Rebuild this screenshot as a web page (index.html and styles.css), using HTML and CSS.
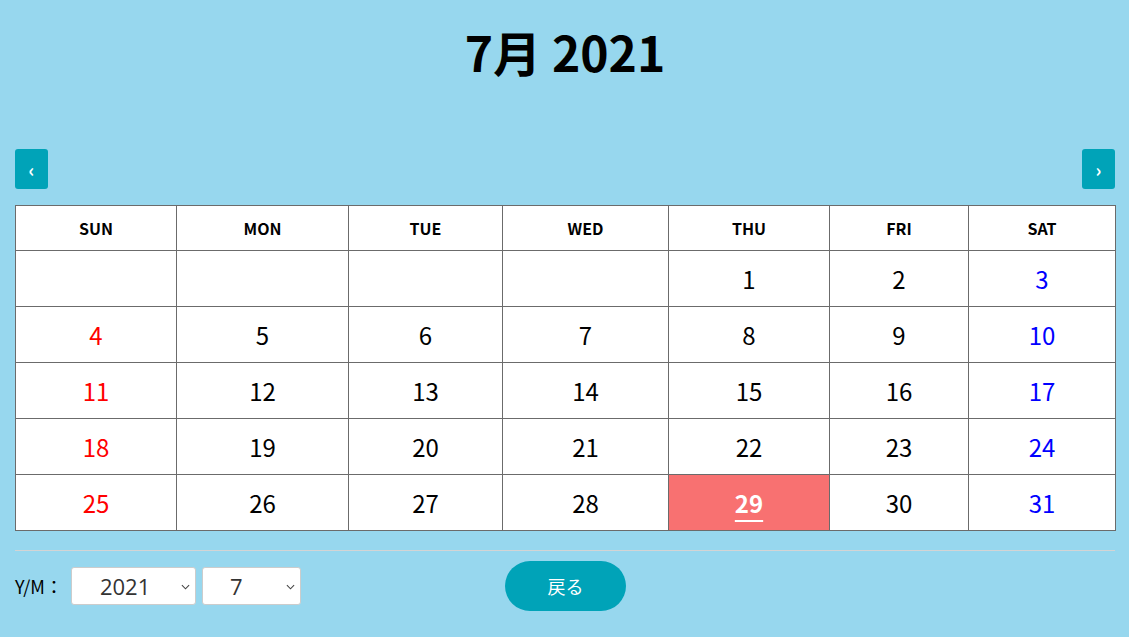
FILE: index.html
```html
<!DOCTYPE html>
<html lang="ja">
<head>
<meta charset="utf-8">
<title>7月 2021</title>
<link rel="stylesheet" href="styles.css">
</head>
<body>
<div class="page">
  <h1 class="title">7月 2021</h1>
  <div class="nav">
    <button class="nav-btn">‹</button>
    <button class="nav-btn">›</button>
  </div>
  <table class="cal">
    <colgroup>
      <col style="width:161px"><col style="width:172px"><col style="width:154px"><col style="width:166px"><col style="width:161px"><col style="width:139px"><col style="width:147px">
    </colgroup>
    <thead>
      <tr><th>SUN</th><th>MON</th><th>TUE</th><th>WED</th><th>THU</th><th>FRI</th><th>SAT</th></tr>
    </thead>
    <tbody>
      <tr><td></td><td></td><td></td><td></td><td>1</td><td>2</td><td class="sat">3</td></tr>
      <tr><td class="sun">4</td><td>5</td><td>6</td><td>7</td><td>8</td><td>9</td><td class="sat">10</td></tr>
      <tr><td class="sun">11</td><td>12</td><td>13</td><td>14</td><td>15</td><td>16</td><td class="sat">17</td></tr>
      <tr><td class="sun">18</td><td>19</td><td>20</td><td>21</td><td>22</td><td>23</td><td class="sat">24</td></tr>
      <tr><td class="sun">25</td><td>26</td><td>27</td><td>28</td><td class="today"><span>29</span></td><td>30</td><td class="sat">31</td></tr>
    </tbody>
  </table>
  <div class="sep"></div>
  <div class="controls">
    <label class="ym">Y/M：</label>
    <div class="sel sel-year"><span>2021</span><svg class="caret" viewBox="0 0 10 6" width="9" height="6"><path d="M1 1l4 4 4-4" fill="none" stroke="#444" stroke-width="1.2"/></svg></div>
    <div class="sel sel-month"><span>7</span><svg class="caret" viewBox="0 0 10 6" width="9" height="6"><path d="M1 1l4 4 4-4" fill="none" stroke="#444" stroke-width="1.2"/></svg></div>
    <button class="back">戻る</button>
  </div>
</div>
</body>
</html>
```
FILE: styles.css
```css
html, body {
  margin: 0;
  padding: 0;
  background: #97d7ee;
  font-family: "Noto Sans CJK JP", "Noto Sans", sans-serif;
  color: #000;
}
.page {
  padding: 0 14px 0 15px;
  height: 637px;
  box-sizing: border-box;
  overflow: hidden;
}
.title {
  margin: 0;
  padding-top: 20px;
  height: 149px;
  box-sizing: border-box;
  text-align: center;
  font-size: 48px;
  font-weight: 700;
  line-height: 62px;
}
.nav {
  display: flex;
  justify-content: space-between;
  height: 40px;
  margin-bottom: 16px;
}
.nav-btn {
  width: 33px;
  height: 40px;
  border: none;
  border-radius: 3px;
  background: #00a3b8;
  color: #fff;
  font-family: "Noto Sans CJK JP", sans-serif;
  font-weight: 700;
  font-size: 18px;
  padding: 0;
  line-height: 40px;
}
.cal {
  border-collapse: collapse;
  table-layout: fixed;
  width: 1100px;
  background: #fff;
}
.cal th, .cal td {
  border: 1px solid #6b6b6b;
  text-align: center;
  padding: 0;
}
.cal th {
  height: 45px;
  font-size: 16px;
  font-weight: 700;
  padding-bottom: 1px;
  box-sizing: border-box;
}
.cal td {
  height: 56px;
  font-size: 24px;
  font-weight: 400;
  padding-bottom: 1px;
  box-sizing: border-box;
}
.cal td.sun { color: #f00; }
.cal td.sat { color: #00f; }
.cal td.today {
  background: #f87171;
  color: #fff;
  font-weight: 700;
}
.cal td.today span {
  text-decoration: underline;
  text-decoration-thickness: 2px;
  text-underline-offset: 7px;
}
.sep {
  margin-top: 19px;
  height: 1px;
  background: #d4d4d4;
}
.controls {
  display: flex;
  align-items: center;
  height: 70px;
}
.ym {
  font-size: 18px;
  margin-right: 8px;
}
.sel {
  height: 38px;
  box-sizing: border-box;
  background: #fff;
  border: 1px solid #ccc;
  border-radius: 3px;
  display: flex;
  align-items: center;
  font-family: "Open Sans", sans-serif;
  font-size: 22px;
  color: #333;
  position: relative;
}
.sel span { line-height: 1; }
.sel-year {
  width: 125px;
  padding-left: 28px;
}
.sel-month {
  width: 99px;
  margin-left: 6px;
  padding-left: 27px;
}
.caret {
  position: absolute;
  right: 5px;
  top: 16px;
}
.back {
  margin-left: 204px;
  width: 121px;
  height: 50px;
  border: none;
  border-radius: 25px;
  background: #00a3b8;
  color: #fff;
  font-family: "Noto Sans CJK JP", sans-serif;
  font-size: 18px;
}
```
